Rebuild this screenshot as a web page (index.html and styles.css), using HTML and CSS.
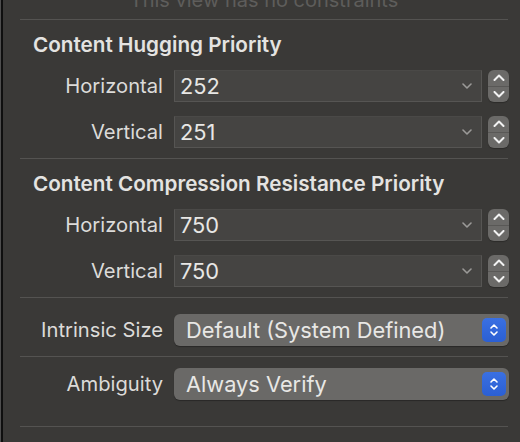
FILE: index.html
```html
<!DOCTYPE html>
<html>
<head>
<meta charset="utf-8">
<link rel="stylesheet" href="styles.css">
</head>
<body>
<div class="panel">
  <div class="note">This view has no constraints</div>
  <div class="sep sep-top"></div>

  <section class="group">
    <h2 class="heading">Content Hugging Priority</h2>
    <div class="row">
      <span class="label">Horizontal</span>
      <div class="combo"><span class="value">252</span>
        <svg class="chev" width="10" height="6" viewBox="0 0 10 6"><path d="M1 1 L5 5 L9 1" fill="none" stroke="#9b9a98" stroke-width="1.6" stroke-linecap="round" stroke-linejoin="round"/></svg>
      </div>
      <div class="stepper">
        <div class="step"><svg width="12" height="7" viewBox="0 0 12 7"><path d="M1.5 6 L6 1.5 L10.5 6" fill="none" stroke="#f2f2f2" stroke-width="2" stroke-linecap="round" stroke-linejoin="round"/></svg></div>
        <div class="step step-down"><svg width="12" height="7" viewBox="0 0 12 7"><path d="M1.5 1 L6 5.5 L10.5 1" fill="none" stroke="#f2f2f2" stroke-width="2" stroke-linecap="round" stroke-linejoin="round"/></svg></div>
      </div>
    </div>
    <div class="row">
      <span class="label">Vertical</span>
      <div class="combo"><span class="value">251</span>
        <svg class="chev" width="10" height="6" viewBox="0 0 10 6"><path d="M1 1 L5 5 L9 1" fill="none" stroke="#9b9a98" stroke-width="1.6" stroke-linecap="round" stroke-linejoin="round"/></svg>
      </div>
      <div class="stepper">
        <div class="step"><svg width="12" height="7" viewBox="0 0 12 7"><path d="M1.5 6 L6 1.5 L10.5 6" fill="none" stroke="#f2f2f2" stroke-width="2" stroke-linecap="round" stroke-linejoin="round"/></svg></div>
        <div class="step step-down"><svg width="12" height="7" viewBox="0 0 12 7"><path d="M1.5 1 L6 5.5 L10.5 1" fill="none" stroke="#f2f2f2" stroke-width="2" stroke-linecap="round" stroke-linejoin="round"/></svg></div>
      </div>
    </div>
  </section>
  <div class="sep"></div>

  <section class="group">
    <h2 class="heading">Content Compression Resistance Priority</h2>
    <div class="row">
      <span class="label">Horizontal</span>
      <div class="combo"><span class="value">750</span>
        <svg class="chev" width="10" height="6" viewBox="0 0 10 6"><path d="M1 1 L5 5 L9 1" fill="none" stroke="#9b9a98" stroke-width="1.6" stroke-linecap="round" stroke-linejoin="round"/></svg>
      </div>
      <div class="stepper">
        <div class="step"><svg width="12" height="7" viewBox="0 0 12 7"><path d="M1.5 6 L6 1.5 L10.5 6" fill="none" stroke="#f2f2f2" stroke-width="2" stroke-linecap="round" stroke-linejoin="round"/></svg></div>
        <div class="step step-down"><svg width="12" height="7" viewBox="0 0 12 7"><path d="M1.5 1 L6 5.5 L10.5 1" fill="none" stroke="#f2f2f2" stroke-width="2" stroke-linecap="round" stroke-linejoin="round"/></svg></div>
      </div>
    </div>
    <div class="row">
      <span class="label">Vertical</span>
      <div class="combo"><span class="value">750</span>
        <svg class="chev" width="10" height="6" viewBox="0 0 10 6"><path d="M1 1 L5 5 L9 1" fill="none" stroke="#9b9a98" stroke-width="1.6" stroke-linecap="round" stroke-linejoin="round"/></svg>
      </div>
      <div class="stepper">
        <div class="step"><svg width="12" height="7" viewBox="0 0 12 7"><path d="M1.5 6 L6 1.5 L10.5 6" fill="none" stroke="#f2f2f2" stroke-width="2" stroke-linecap="round" stroke-linejoin="round"/></svg></div>
        <div class="step step-down"><svg width="12" height="7" viewBox="0 0 12 7"><path d="M1.5 1 L6 5.5 L10.5 1" fill="none" stroke="#f2f2f2" stroke-width="2" stroke-linecap="round" stroke-linejoin="round"/></svg></div>
      </div>
    </div>
  </section>
  <div class="sep"></div>

  <div class="row row-popup">
    <span class="label">Intrinsic Size</span>
    <div class="popup"><span class="value">Default (System Defined)</span>
      <div class="popup-btn"><svg width="10" height="16" viewBox="0 0 10 16"><path d="M2 6 L5 3 L8 6 M2 10 L5 13 L8 10" fill="none" stroke="#ffffff" stroke-width="1.6" stroke-linecap="round" stroke-linejoin="round"/></svg></div>
    </div>
  </div>
  <div class="sep"></div>
  <div class="row row-popup">
    <span class="label">Ambiguity</span>
    <div class="popup"><span class="value">Always Verify</span>
      <div class="popup-btn"><svg width="10" height="16" viewBox="0 0 10 16"><path d="M2 6 L5 3 L8 6 M2 10 L5 13 L8 10" fill="none" stroke="#ffffff" stroke-width="1.6" stroke-linecap="round" stroke-linejoin="round"/></svg></div>
    </div>
  </div>
  <div class="sep sep-bottom"></div>
</div>
</body>
</html>
```

FILE: styles.css
```css
html, body {
  margin: 0;
  padding: 0;
  height: 100%;
  background: #4e4e4e;
  overflow: hidden;
}

.panel {
  margin-left: 1px;
  border-left: 2px solid #0f0f0f;
  background: #3a3937;
  height: 100%;
  box-sizing: border-box;
  font-family: Inter, "Noto Sans", sans-serif;
  font-size: 20px;
  color: #dedddb;
  overflow: hidden;
}

.note {
  margin-top: -12px;
  margin-left: 17px;
  margin-right: 12px;
  line-height: 24px;
  text-align: center;
  color: #5e5d5b;
}

.sep {
  height: 1px;
  background: #545351;
  margin: 10px 12px 0 17px;
}

.sep-top {
  margin-top: 7px;
}

.heading {
  margin: 13px 0 0 30px;
  font-size: 20.7px;
  font-weight: 600;
  line-height: 24px;
  color: #e4e3e1;
}

.group .row:first-of-type {
  margin-top: 13px;
}

.row {
  display: flex;
  align-items: center;
  margin-top: 14px;
  margin-right: 11px;
}

.label {
  width: 171px;
  flex: none;
  text-align: right;
  padding-right: 11px;
  box-sizing: border-box;
  font-size: 20.2px;
  color: #dcdbd9;
  line-height: 24px;
  white-space: nowrap;
}

.combo {
  flex: 1;
  height: 32px;
  box-sizing: border-box;
  background: #454442;
  border: 1px solid #565553;
  border-top-color: #4a4947;
  display: flex;
  align-items: center;
  padding-left: 5px;
  padding-right: 9px;
}

.value {
  flex: 1;
  font-size: 21.8px;
  color: #e8e7e5;
  line-height: 26px;
  white-space: nowrap;
}

.chev {
  flex: none;
}

.stepper {
  flex: none;
  width: 21px;
  height: 32px;
  margin-left: 6px;
  border-radius: 6px;
  background: #6b6a68;
  display: flex;
  flex-direction: column;
  overflow: hidden;
  box-shadow: 0 1px 1px rgba(0,0,0,0.25);
}

.step {
  flex: 1;
  display: flex;
  align-items: center;
  justify-content: center;
}

.step-down {
  border-top: 1px solid #595856;
}

.row-popup {
  margin-top: 16px;
}

.popup {
  flex: 1;
  height: 32px;
  box-sizing: border-box;
  border-radius: 6px;
  background: #6a6967;
  display: flex;
  align-items: center;
  padding-left: 12px;
  padding-right: 3px;
  box-shadow: 0 1px 1px rgba(0,0,0,0.3);
}

.popup-btn {
  flex: none;
  width: 24px;
  height: 24px;
  border-radius: 5px;
  background: linear-gradient(#3a70e2, #2b5fd3);
  display: flex;
  align-items: center;
  justify-content: center;
}

.sep + .row-popup + .sep + .row-popup {
  margin-top: 11px;
}

.sep-bottom {
  margin-top: 26px;
}
```
